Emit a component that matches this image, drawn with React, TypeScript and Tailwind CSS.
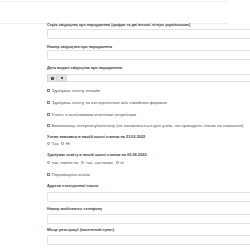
import React from "react";

function Label({ text, className = "" }: { text: string; className?: string }) {
  return (
    <div className={`h-[5px] leading-[5px] text-[3.85px] font-bold text-[#444] whitespace-nowrap ${className}`}>
      {text}
    </div>
  );
}

function TextInput({ className = "" }: { className?: string }) {
  return <div className={`h-[10px] w-[220px] border border-[#e2e2e2] rounded-[1px] bg-white ${className}`} />;
}

function Check({ text, className = "" }: { text: string; className?: string }) {
  return (
    <div className={`flex items-center gap-[1.5px] h-[5px] leading-[5px] text-[4.4px] text-[#555] whitespace-nowrap ${className}`}>
      <span className="w-[3px] h-[3px] border-[0.5px] border-[#888] bg-white shrink-0" />
      <span>{text}</span>
    </div>
  );
}

function Radios({ items, className = "" }: { items: string[]; className?: string }) {
  return (
    <div className={`flex items-center gap-[1.5px] h-[5px] leading-[5px] text-[4.4px] text-[#555] whitespace-nowrap ${className}`}>
      {items.map((t) => (
        <React.Fragment key={t}>
          <span className="w-[3px] h-[3px] rounded-full border-[0.5px] border-[#888] bg-white shrink-0" />
          <span className="mr-[1.5px]">{t}</span>
        </React.Fragment>
      ))}
    </div>
  );
}

export default function App() {
  return (
    <div className="w-[250px] h-[250px] overflow-hidden bg-white" style={{ fontFamily: '"Liberation Sans", Arial, sans-serif' }}>
      <div className="mt-[1px] h-px w-[228px] bg-[#eee]" />
      <div className="mt-[21px] h-px w-[228px] bg-[#eee]" />
      <div className="pl-[47px]">
        <Label text="Серія свідоцтва про народження (цифри та дві великі літери українською)" className="-mt-px" />
        <TextInput className="mt-[1px]" />
        <Label text="Номер свідоцтва про народження" className="mt-[6px]" />
        <TextInput className="mt-[0px]" />
        <Label text="Дата видачі свідоцтва про народження" className="mt-[6px]" />
        <div className="mt-[3px] flex h-[8px] w-[220px]">
          <div className="w-[10px] h-full bg-[#e3e3e3] border border-[#d5d5d5] flex items-center justify-center">
            <span className="w-[3px] h-[3px] bg-[#555]" />
          </div>
          <div className="w-[10px] h-full bg-[#e3e3e3] border border-l-0 border-[#d5d5d5] flex items-center justify-center">
            <span className="w-[2px] h-[2px] bg-[#555]" />
          </div>
          <div className="flex-1 h-full border border-l-0 border-[#e2e2e2]" />
        </div>
        <Check text="Здобуває освіту онлайн" className="mt-[6px]" />
        <Check text="Здобуває освіту за екстернатною або сімейною формою" className="mt-[7px]" />
        <Check text="Учень з особливими освітніми потребами" className="mt-[7px]" />
        <Check text="Вихованець інтернату/пансіону (не заповнюється для учнів, які приходять тільки на навчання)" className="mt-[6px]" />
        <Label text="Учень навчався в нашій школі станом на 23.02.2022" className="mt-[7px]" />
        <Radios items={["Так", "Ні"]} className="mt-[1px]" />
        <Label text="Здобуває освіту в нашій школі станом на 05.09.2022:" className="mt-[7px]" />
        <Radios items={["так, повністю", "так, частково", "ні"]} className="mt-[2px]" />
        <Check text="Переміщена особа" className="mt-[7px]" />
        <Label text="Адреса електронної пошти" className="mt-[7px]" />
        <TextInput className="mt-[3px] h-[9px]" />
        <Label text="Номер мобільного телефону" className="mt-[5px]" />
        <TextInput className="mt-[2px]" />
        <Label text="Місце реєстрації (населений пункт)" className="mt-[4px]" />
        <TextInput className="mt-[2px]" />
      </div>
    </div>
  );
}
